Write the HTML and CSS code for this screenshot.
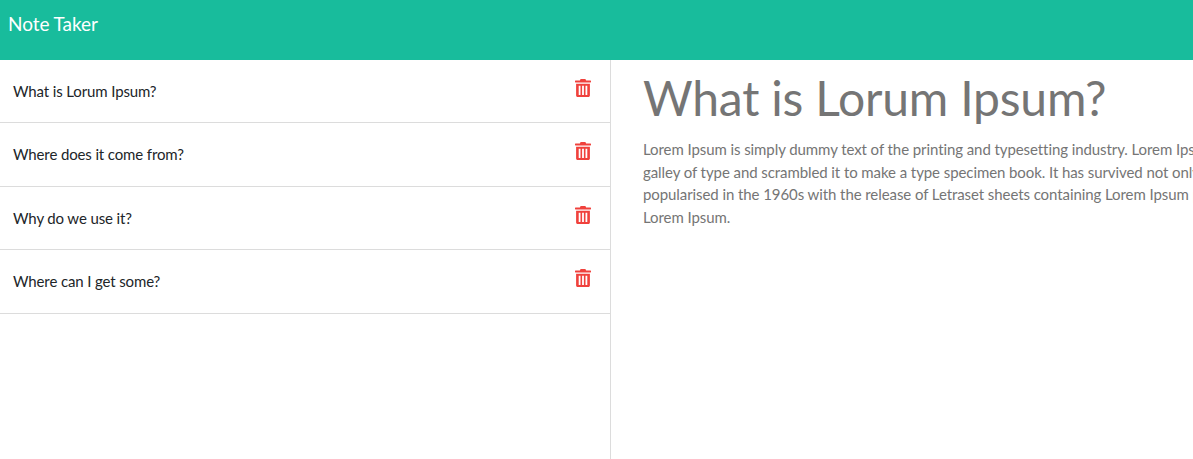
FILE: index.html
```html
<!DOCTYPE html>
<html lang="en">
<head>
<meta charset="utf-8">
<title>Note Taker</title>
<link rel="stylesheet" href="styles.css">
</head>
<body>
<svg class="defs" width="0" height="0" aria-hidden="true">
  <symbol id="trash" viewBox="0 0 16 18">
    <path fill-rule="evenodd" d="M5.6 0h4.8l.7 1.4H15.500c.3 0 .5.2.5.5v1.200c0 .3-.2.5-.5.5H.5c-.3 0-.5-.2-.5-.5V1.900c0-.3.2-.5.5-.5H4.900zM1.100 4.800h13.800v11.700c0 .8-.7 1.500-1.500 1.500H2.600c-.8 0-1.500-.7-1.500-1.500zM3.700 6.700v9.400h1.800V6.700zM7.100 6.700v9.400h1.800V6.700zM10.500 6.700v9.400h1.800V6.700z"/>
  </symbol>
</svg>
<header class="navbar"><span class="brand">Note Taker</span></header>
<main class="layout">
  <aside class="sidebar">
    <ul class="notes">
      <li class="note"><span>What is Lorum Ipsum?</span><svg class="trash"><use href="#trash"/></svg></li>
      <li class="note"><span>Where does it come from?</span><svg class="trash"><use href="#trash"/></svg></li>
      <li class="note"><span>Why do we use it?</span><svg class="trash"><use href="#trash"/></svg></li>
      <li class="note"><span>Where can I get some?</span><svg class="trash"><use href="#trash"/></svg></li>
    </ul>
  </aside>
  <section class="detail">
    <h1 class="title">What is Lorum Ipsum?</h1>
    <p class="body-text">Lorem Ipsum is simply dummy text of the printing and typesetting industry. Lorem Ipsum has been the industry's standard dummy text ever since the 1500s,<br>galley of type and scrambled it to make a type specimen book. It has survived not only five centuries, but also the leap into electronic typesetting,<br>popularised in the 1960s with the release of Letraset sheets containing Lorem Ipsum passages, and more recently with desktop publishing software<br>Lorem Ipsum.</p>
  </section>
</main>
</body>
</html>
```
FILE: styles.css
```css
* { box-sizing: border-box; }
html, body { margin: 0; height: 100%; overflow: hidden; }
body { font-family: Lato, sans-serif; font-size: 15px; line-height: 1.5; background: #fff; color: #212529; display: flex; flex-direction: column; }
.defs { position: absolute; }
.navbar { height: 60px; flex: none; background: #18bc9c; padding: 9px 8px; }
.brand { color: #fff; font-size: 19px; line-height: 29px; display: block; letter-spacing: -0.06px; }
.layout { flex: 1; display: flex; min-height: 0; }
.sidebar { width: 611px; flex: none; border-right: 1px solid #dcdcdc; }
.notes { list-style: none; margin: 0; padding: 0; }
.note { height: 63.500px; border-bottom: 1px solid #dcdcdc; padding: 0 19px 0 13px; display: flex; justify-content: space-between; align-items: flex-start; letter-spacing: -0.13px; }
.note:first-child { height: 63px; }
.note span { margin-top: 20px; }
.trash { width: 16px; height: 18px; margin-top: 19px; fill: #f0413c; }
.detail { flex: 1; min-width: 0; padding: 0 0 0 32px; color: #757575; white-space: nowrap; overflow: hidden; }
.title { margin: 5px 0 7px; font-size: 48px; font-weight: 400; line-height: 66px; letter-spacing: -0.2px; }
.body-text { margin: 0; line-height: 22.500px; letter-spacing: -0.08px; }
```
